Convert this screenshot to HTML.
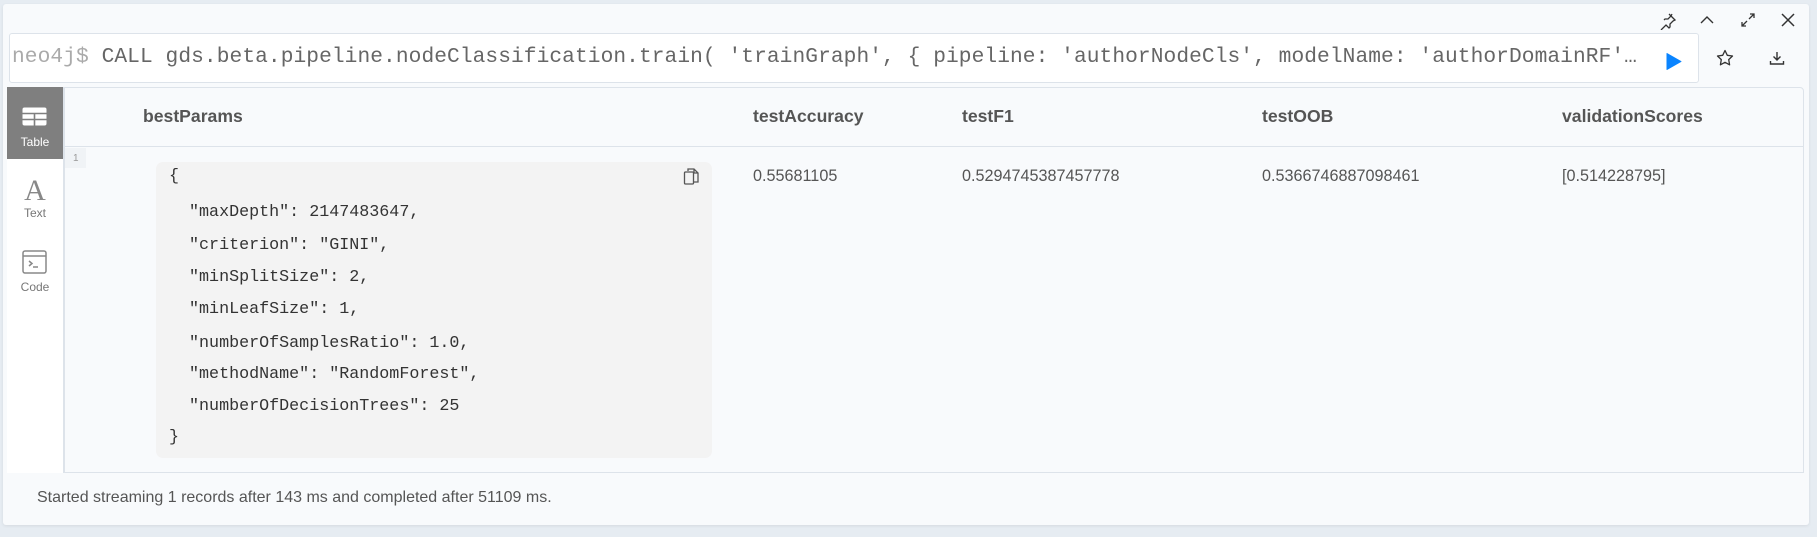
<!DOCTYPE html>
<html><head><meta charset="utf-8"><style>
*{margin:0;padding:0;box-sizing:border-box}
body{width:1817px;height:537px;background:#e6ecf2;font-family:"Liberation Sans",sans-serif;position:relative;overflow:hidden}
.card{position:absolute;left:3px;top:4px;width:1806px;height:521px;background:#f8fafc;border-radius:3px;box-shadow:0 1px 3px rgba(0,0,0,.08)}
.abs{position:absolute}
.input{left:9px;top:33px;width:1690px;height:50px;background:#fff;border:1px solid #dde3ea;border-radius:3px}
.cmd{left:12px;top:45px;font-family:"Liberation Mono",monospace;font-size:21.2px;color:#666;white-space:nowrap;letter-spacing:0.08px}
.cmd span{color:#aaa}
.side{left:7px;top:87px;width:56px;height:386px;background:#fff}
.tab{position:absolute;left:7px;width:56px;text-align:center;font-size:11px;color:#777}
.tbl{left:63px;top:87px;width:1741px;height:386px;border:1px solid #dde3ea;border-left:2px solid #dde3ea;border-radius:0 4px 0 0;background:#f8fafc}
.hd{position:absolute;top:106px;font-weight:bold;font-size:17.6px;color:#555}
.v{position:absolute;top:167px;font-size:16.2px;color:#555}
.code{left:156px;top:162px;width:556px;height:296px;background:#f3f3f3;border-radius:7px}
.ln{position:absolute;left:169px;font-family:"Liberation Mono",monospace;font-size:16.7px;color:#333;white-space:pre}
</style></head><body>
<div class="card"></div>
<svg class="abs" style="left:1659px;top:12px" width="18" height="18" viewBox="0 0 18 18" fill="none" stroke="#333" stroke-width="1.3"><path d="M10 2l6 6-2 1-3 3v3l-1 1-3-3-5 5M5 8l1-1h3l3-3 1-2"/></svg>
<svg class="abs" style="left:1699px;top:13px" width="16" height="14" viewBox="0 0 16 14" fill="none" stroke="#333" stroke-width="1.4"><path d="M2 10l6-6 6 6"/></svg>
<svg class="abs" style="left:1741px;top:13px" width="14" height="14" viewBox="0 0 14 14" fill="none" stroke="#333" stroke-width="1.3"><path d="M8 6l5-5M9 1h4v4M6 8l-5 5M1 9v4h4"/></svg>
<svg class="abs" style="left:1781px;top:13px" width="14" height="14" viewBox="0 0 14 14" fill="none" stroke="#333" stroke-width="1.5"><path d="M1 1l12 12M13 1L1 13"/></svg>
<div class="abs input"></div>
<div class="abs cmd"><span>neo4j$</span> CALL gds.beta.pipeline.nodeClassification.train( 'trainGraph', { pipeline: 'authorNodeCls', modelName: 'authorDomainRF'…</div>
<svg class="abs" style="left:1666px;top:52px" width="16" height="19" viewBox="0 0 16 19"><path d="M1 1.5v16l14-8z" fill="#0a84ff" stroke="#0a84ff" stroke-linejoin="round"/></svg>
<svg class="abs" style="left:1716px;top:49px" width="18" height="18" viewBox="0 0 18 18" fill="none" stroke="#333" stroke-width="1.3" stroke-linejoin="round"><path d="M9 1.5l2.3 4.8 5.2.7-3.8 3.6.9 5.2L9 13.3l-4.6 2.5.9-5.2L1.5 7l5.2-.7z"/></svg>
<svg class="abs" style="left:1769px;top:50px" width="16" height="16" viewBox="0 0 16 16" fill="none" stroke="#333" stroke-width="1.4"><path d="M8 2v8M4.5 6.5L8 10l3.5-3.5M1.5 11v3h13v-3"/></svg>
<div class="abs side"></div>
<div class="abs" style="left:7px;top:87px;width:56px;height:72px;background:#7f7f7f"></div>
<svg class="abs" style="left:22px;top:107px" width="25" height="19" viewBox="0 0 25 19"><rect x="0.5" y="0.5" width="24" height="18" rx="2" fill="#fff"/><path d="M0 6.5h25M0 12.5h25M12.5 6v13" stroke="#7f7f7f" stroke-width="1.6"/></svg>
<div class="tab" style="top:135px;color:#fff;font-size:12px">Table</div>
<div class="tab" style="top:176px;font-family:'Liberation Serif',serif;font-size:30px;color:#888;line-height:30px">A</div>
<div class="tab" style="top:206px;font-size:12px">Text</div>
<svg class="abs" style="left:22px;top:250px" width="25" height="24" viewBox="0 0 25 24" fill="none" stroke="#888" stroke-width="1.5"><rect x="1" y="1" width="23" height="22" rx="2"/><path d="M1 6h23M7 11l3 2.5-3 2.5M11 17h5"/></svg>
<div class="tab" style="top:280px;font-size:12px">Code</div>
<div class="abs tbl"></div>
<div class="abs" style="left:65px;top:146px;width:1738px;height:1px;background:#dde3ea"></div>
<div class="abs" style="left:65px;top:148px;width:21px;height:20px;background:#f0f3f6;font-size:10px;color:#999;padding:5px 0 0 8px">1</div>
<div class="hd" style="left:143px">bestParams</div>
<div class="hd" style="left:753px">testAccuracy</div>
<div class="hd" style="left:962px">testF1</div>
<div class="hd" style="left:1262px">testOOB</div>
<div class="hd" style="left:1562px">validationScores</div>
<div class="abs code"></div>
<svg class="abs" style="left:683px;top:167px" width="16" height="18" viewBox="0 0 16 18" fill="none" stroke="#555" stroke-width="1.3"><path d="M5 4V2h6l4 4v9h-4M11 2v4h4"/><rect x="1.5" y="5" width="9" height="12" rx="1"/></svg>
<div class="ln" style="top:167px">{</div>
<div class="ln" style="top:203px">  "maxDepth": 2147483647,</div>
<div class="ln" style="top:236px">  "criterion": "GINI",</div>
<div class="ln" style="top:268px">  "minSplitSize": 2,</div>
<div class="ln" style="top:300px">  "minLeafSize": 1,</div>
<div class="ln" style="top:334px">  "numberOfSamplesRatio": 1.0,</div>
<div class="ln" style="top:365px">  "methodName": "RandomForest",</div>
<div class="ln" style="top:397px">  "numberOfDecisionTrees": 25</div>
<div class="ln" style="top:428px">}</div>
<div class="v" style="left:753px">0.55681105</div>
<div class="v" style="left:962px">0.5294745387457778</div>
<div class="v" style="left:1262px">0.5366746887098461</div>
<div class="v" style="left:1562px">[0.514228795]</div>
<div class="abs" style="left:37px;top:489px;font-size:16px;color:#555">Started streaming 1 records after 143 ms and completed after 51109 ms.</div>
</body></html>
